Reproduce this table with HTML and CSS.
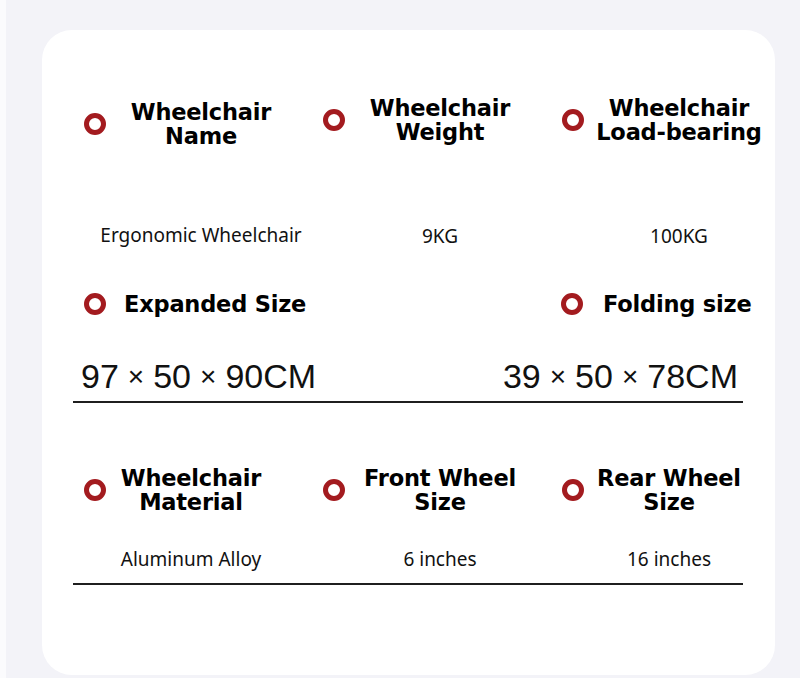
FILE: index.html
```html
<!DOCTYPE html>
<html lang="en">
<head>
<meta charset="utf-8">
<title>Wheelchair Specifications</title>
<link rel="stylesheet" href="styles.css">
</head>
<body>
<div class="page">
  <div class="card">
    <div class="grid row1">
      <div class="spec">
        <div class="head"><span class="ring"></span><h3 class="title">Wheelchair<br>Name</h3></div>
        <div class="value">Ergonomic Wheelchair</div>
      </div>
      <div class="spec up">
        <div class="head"><span class="ring"></span><h3 class="title">Wheelchair<br>Weight</h3></div>
        <div class="value">9KG</div>
      </div>
      <div class="spec up">
        <div class="head"><span class="ring"></span><h3 class="title">Wheelchair<br>Load-bearing</h3></div>
        <div class="value">100KG</div>
      </div>
    </div>

    <div class="size-block">
      <div class="size-heads">
        <div class="size-head"><span class="ring"></span><h3 class="title-line">Expanded Size</h3></div>
        <div class="size-head right"><span class="ring"></span><h3 class="title-line">Folding size</h3></div>
      </div>
      <div class="size-values">
        <span>97<span class="times">×</span>50<span class="times">×</span>90CM</span>
        <span>39<span class="times">×</span>50<span class="times">×</span>78CM</span>
      </div>
    </div>

    <div class="grid row3">
      <div class="spec narrow">
        <div class="head"><span class="ring"></span><h3 class="title">Wheelchair<br>Material</h3></div>
        <div class="value">Aluminum Alloy</div>
      </div>
      <div class="spec">
        <div class="head"><span class="ring"></span><h3 class="title">Front Wheel<br>Size</h3></div>
        <div class="value">6 inches</div>
      </div>
      <div class="spec narrow">
        <div class="head"><span class="ring"></span><h3 class="title">Rear Wheel<br>Size</h3></div>
        <div class="value">16 inches</div>
      </div>
    </div>
  </div>
</div>
</body>
</html>
```

FILE: styles.css
```css
* { box-sizing: border-box; }

html, body {
  margin: 0;
  padding: 0;
}

body {
  background: #f3f3f8;
  width: 800px;
  height: 678px;
  overflow: hidden;
}

.page {
  border-left: 6px solid #fbfbfd;
  height: 678px;
  padding-top: 30px;
  padding-left: 36px;
}

.card {
  width: 733px;
  height: 645px;
  background: #ffffff;
  border-radius: 30px;
  padding-top: 70px;
}

.grid {
  display: grid;
  grid-template-columns: 239px 239px 239px;
  padding-left: 42px;
}

.spec {
  display: flex;
  flex-direction: column;
}

.spec.up { margin-top: -4px; }

.head {
  display: flex;
  align-items: center;
  gap: 10px;
}

.ring {
  flex: none;
  width: 22px;
  height: 22px;
  border-radius: 50%;
  border: 5.5px solid #a31b1f;
}

.title {
  margin: 0;
  width: 170px;
  text-align: center;
  font-family: "DejaVu Sans", Verdana, sans-serif;
  font-weight: bold;
  font-size: 22.5px;
  line-height: 24px;
  color: #000;
  letter-spacing: -0.2px;
}

.spec.narrow .title { width: 150px; }

.value {
  margin-left: 32px;
  width: 170px;
  display: flex;
  justify-content: center;
  white-space: nowrap;
  font-family: "Noto Sans", "Open Sans", sans-serif;
  font-size: 19px;
  line-height: 24px;
  color: #111;
}

.spec.narrow .value { width: 150px; }

.row1 .value { margin-top: 75px; }
.row1 .spec.up .value { margin-top: 80px; }

/* sizes */
.size-block {
  margin-top: 42px;
  margin-left: 31px;
  width: 670px;
  border-bottom: 2px solid #1f1f1f;
  padding-bottom: 3px;
}

.size-heads {
  display: grid;
  grid-template-columns: 477px 193px;
  padding-left: 11px;
}

.size-head {
  display: flex;
  align-items: center;
  gap: 18px;
}

.size-head.right { gap: 20px; }

.title-line {
  margin: 0;
  white-space: nowrap;
  font-family: "DejaVu Sans", Verdana, sans-serif;
  font-weight: bold;
  font-size: 22.5px;
  line-height: 28px;
  color: #000;
  letter-spacing: -0.2px;
}

.size-values {
  margin-top: 39px;
  display: flex;
  justify-content: space-between;
  padding-left: 8px;
  padding-right: 5px;
  font-family: "Liberation Sans", Arial, sans-serif;
  font-size: 34px;
  line-height: 38px;
  color: #111;
}

.times {
  font-size: 28px;
  margin: 0 9px;
  position: relative;
  top: -2px;
}

.row3 {
  margin-top: 63px;
  margin-left: 31px;
  width: 670px;
  padding-left: 11px;
  border-bottom: 2px solid #1f1f1f;
  padding-bottom: 12px;
}

.row3 .value { margin-top: 33px; }
```
